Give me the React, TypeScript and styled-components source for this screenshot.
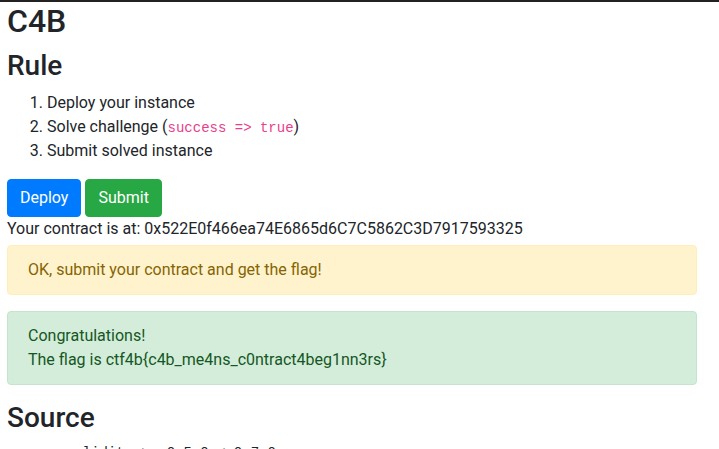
import * as React from "react";
import styled, { createGlobalStyle } from "styled-components";

const GlobalStyle = createGlobalStyle`
  *, *::before, *::after {
    box-sizing: border-box;
  }

  body {
    margin: 0;
    font-family: Roboto, "Liberation Sans", Arial, sans-serif;
    font-size: 16px;
    line-height: 1.5;
    color: #212529;
    background: #fff;
    border-top: 2px solid #222;
  }
`;

const Page = styled.div`
  padding: 0 22px 0 7px;
`;

const Title = styled.h2`
  margin: 0 0 9px;
  font-size: 32px;
  font-weight: 500;
  line-height: 1.2;
`;

const Heading = styled.h3`
  margin: 0 0 8px;
  font-size: 28px;
  font-weight: 500;
  line-height: 1.2;
`;

const Steps = styled.ol`
  margin: 0 0 16px;
  padding-left: 40px;
`;

const Code = styled.code`
  font-family: "Liberation Mono", "DejaVu Sans Mono", monospace;
  font-size: 87.5%;
  color: #e83e8c;
`;

const Actions = styled.div`
  display: flex;
  gap: 4px;
`;

const Button = styled.button<{ $variant: "primary" | "success" }>`
  display: inline-block;
  padding: 6px 12px;
  font-family: inherit;
  font-size: 16px;
  line-height: 1.5;
  color: #fff;
  border: 1px solid ${p => (p.$variant === "primary" ? "#007bff" : "#28a745")};
  background: ${p => (p.$variant === "primary" ? "#007bff" : "#28a745")};
  border-radius: 4px;
  cursor: pointer;
`;

const Address = styled.div`
  margin-bottom: 4px;
`;

const palettes = {
  warning: { bg: "#fff3cd", border: "#ffeeba", fg: "#856404" },
  success: { bg: "#d4edda", border: "#c3e6cb", fg: "#155724" }
};

const Alert = styled.div<{ $kind: keyof typeof palettes }>`
  margin-bottom: 16px;
  padding: 12px 20px;
  border: 1px solid ${p => palettes[p.$kind].border};
  border-radius: 4px;
  background: ${p => palettes[p.$kind].bg};
  color: ${p => palettes[p.$kind].fg};
`;

const Source = styled.pre`
  margin: 0 0 16px;
  font-family: "Liberation Mono", "DejaVu Sans Mono", monospace;
  font-size: 14px;
  color: #212529;
`;

const source = `pragma solidity >= 0.5.0 < 0.7.0;

contract C4B {
    bool public success = false;
}`;

export default function App() {
  return (
    <Page>
      <GlobalStyle />
      <Title>C4B</Title>
      <Heading>Rule</Heading>
      <Steps>
        <li>Deploy your instance</li>
        <li>
          Solve challenge (<Code>success =&gt; true</Code>)
        </li>
        <li>Submit solved instance</li>
      </Steps>
      <Actions>
        <Button $variant="primary">Deploy</Button>
        <Button $variant="success">Submit</Button>
      </Actions>
      <Address>Your contract is at: 0x522E0f466ea74E6865d6C7C5862C3D7917593325</Address>
      <Alert $kind="warning">OK, submit your contract and get the flag!</Alert>
      <Alert $kind="success">
        Congratulations!
        <br />
        The flag is ctf4b{"{"}c4b_me4ns_c0ntract4beg1nn3rs{"}"}
      </Alert>
      <Heading>Source</Heading>
      <Source>{source}</Source>
    </Page>
  );
}
